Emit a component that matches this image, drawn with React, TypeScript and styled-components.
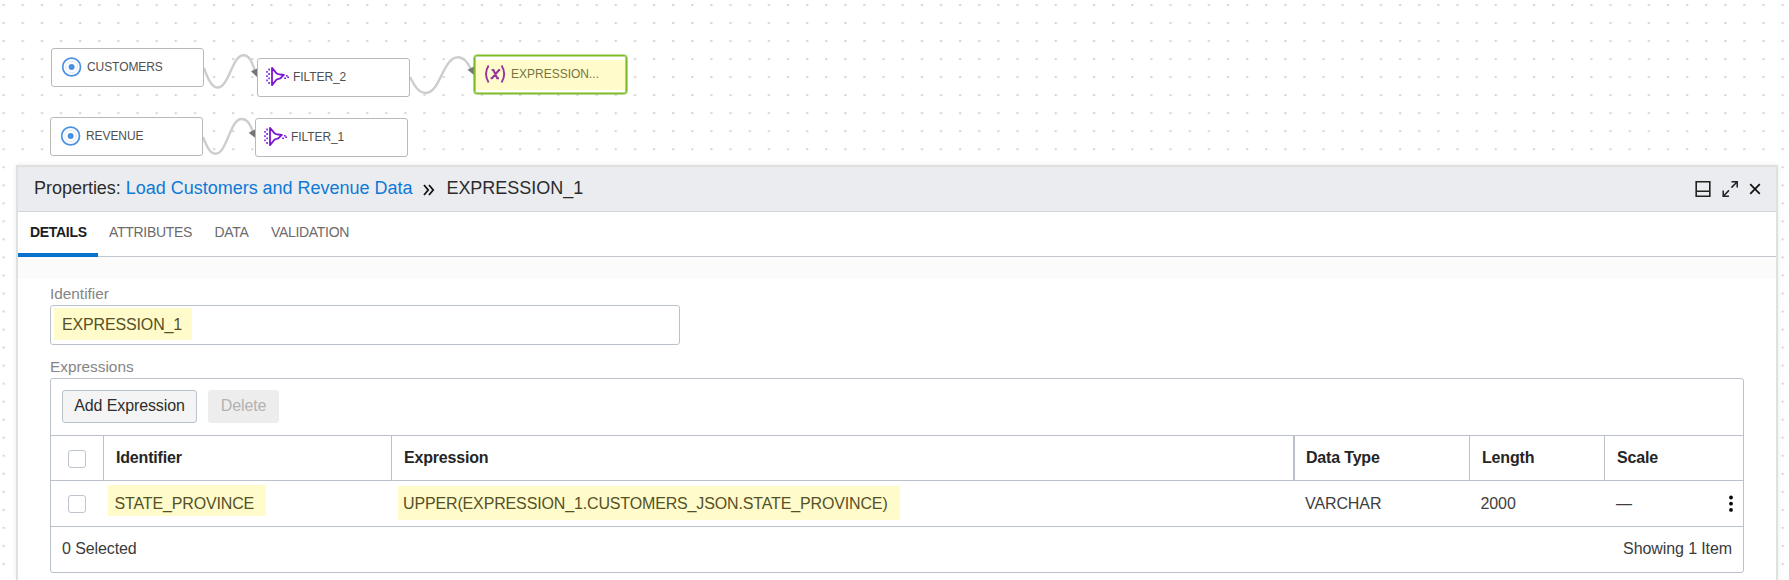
import React from "react";
import styled, { createGlobalStyle, css } from "styled-components";

const GlobalStyle = createGlobalStyle`
  * { box-sizing: border-box; }
  body {
    margin: 0;
    background: #fff;
    font-family: "Liberation Sans", Arial, sans-serif;
    color: #2b2b2b;
    overflow: hidden;
  }
`;

const Page = styled.main`
  position: relative;
  height: 580px;
  overflow: hidden;
  display: flex;
  flex-direction: column;
`;

const CanvasArt = styled.svg`
  position: absolute;
  inset: 0;
`;

const Canvas = styled.section`
  position: relative;
  flex: 0 0 165px;
`;

const Node = styled.div<{ $x: number; $y: number; $selected?: boolean }>`
  position: absolute;
  left: ${(p) => p.$x}px;
  top: ${(p) => p.$y}px;
  width: 153px;
  height: 39px;
  padding: 0 0 1px 8px;
  display: flex;
  align-items: center;
  background: #fff;
  border: 1px solid #b9b9b9;
  border-radius: 3px;
  font-size: 12px;
  letter-spacing: -0.08px;
  color: #505050;
  ${(p) =>
    p.$selected &&
    css`
      border-color: #7cbb27;
      box-shadow: 0 0 0 0.6px #7cbb27, inset 0 0 0 0.6px #7cbb27;
      padding-left: 9px;
      letter-spacing: 0;
      color: #77753f;
      background: linear-gradient(#fff 4px, #fffbca 4px, #fffbca 34px, #fff 34px);
    `}
`;

const NodeIcon = styled.svg`
  flex: none;
  width: 24px;
  height: 24px;
  margin-right: 3px;
`;

const Panel = styled.section`
  position: relative;
  flex: 1;
  margin: 0 11px 0 16px;
  border: 2px solid #dfe0e0;
  border-bottom: 0;
  background: #fff;
  box-shadow: 0 0 5px rgba(0, 0, 0, 0.09);
`;

const PanelHeader = styled.header`
  height: 45px;
  padding: 0 12px 1px 16px;
  display: flex;
  align-items: center;
  background: #ebecf0;
  border-bottom: 1px solid #d2d5db;
  font-size: 18px;
  letter-spacing: -0.02px;
`;

const PanelLink = styled.a`
  margin-left: 5px;
  color: #0f79d6;
`;

const Chevrons = styled.svg`
  margin: 3px 11px 0 11px;
`;

const HeaderTools = styled.div`
  margin-left: auto;
  padding-top: 1px;
  display: flex;
  align-items: center;
  gap: 9px;
  svg:last-child { margin-left: -2px; }
`;

const Tabs = styled.nav`
  height: 45px;
  display: flex;
  border-bottom: 1px solid #c3c7ce;
`;

const Tab = styled.div<{ $active?: boolean }>`
  height: 45px;
  padding: 12px 11.4px 0 11px;
  font-size: 14px;
  line-height: 16px;
  letter-spacing: -0.3px;
  color: #6b6b6b;
  ${(p) =>
    p.$active &&
    css`
      width: 80px;
      padding-left: 12px;
      padding-right: 0;
      font-weight: bold;
      color: #1c1c1c;
      border-bottom: 4px solid #0572ce;
    `}
`;

const Strip = styled.div`
  height: 22px;
  background: #fbfbfb;
`;

const Form = styled.div`
  padding: 0 32px;
`;

const Label = styled.label<{ $top: number }>`
  display: block;
  margin-top: ${(p) => p.$top}px;
  height: 20px;
  font-size: 15.4px;
  line-height: 20px;
  letter-spacing: -0.02px;
  color: #858585;
`;

const Field = styled.div`
  width: 630px;
  height: 40px;
  margin-top: 1px;
  padding: 2px 3px;
  border: 1px solid #bac1c9;
  border-radius: 3px;
`;

const Mark = styled.span<{ $w: number; $h: number; $pad: number; $top: number }>`
  display: block;
  width: ${(p) => p.$w}px;
  height: ${(p) => p.$h}px;
  padding: ${(p) => p.$top}px 0 0 ${(p) => p.$pad}px;
  background: #fffbca;
  color: #545127;
  font-size: 16px;
  line-height: 18px;
  letter-spacing: -0.145px;
  white-space: nowrap;
`;

const Table = styled.div`
  margin-top: 1px;
  height: 195px;
  border: 1px solid #bac1c9;
  border-radius: 3px;
  font-size: 16px;
`;

const Toolbar = styled.div`
  height: 56px;
  padding: 11px;
  display: flex;
  gap: 11px;
`;

const Button = styled.button<{ $w: number }>`
  width: ${(p) => p.$w}px;
  height: 33px;
  padding: 0 0 1px;
  border: 1px solid #b9c2cb;
  border-radius: 3px;
  background: #f4f4f4;
  color: #2d2d2d;
  font: inherit;
  letter-spacing: -0.1px;
  white-space: nowrap;
  &:disabled {
    border-color: #ededed;
    background: #ededed;
    color: #b2b2b2;
  }
`;

const Row = styled.div<{ $h: number }>`
  height: ${(p) => p.$h}px;
  display: grid;
  grid-template-columns: 52px 288px 902px 176px 135px 1fr;
  border-top: 1px solid #bac1c9;
`;

const HeadCell = styled.div<{ $thick?: boolean }>`
  padding: 13px 0 0 ${(p) => (p.$thick ? 11 : 12)}px;
  border-left: ${(p) => (p.$thick ? 2 : 1)}px solid #bac1c9;
  font-weight: bold;
  line-height: 18px;
  letter-spacing: -0.18px;
  color: #252525;
`;

const CheckCell = styled.div`
  padding: 14px 0 0 17px;
`;

const Checkbox = styled.div`
  width: 18px;
  height: 18px;
  border: 1px solid #bdc4cf;
  border-radius: 3px;
`;

const Cell = styled.div<{ $left?: number; $top?: number }>`
  padding: ${(p) => p.$top ?? 14}px 0 0 ${(p) => p.$left ?? 12}px;
  line-height: 18px;
  letter-spacing: -0.1px;
  color: #3e3e3e;
`;

const LastCell = styled(Cell)`
  display: flex;
  justify-content: space-between;
  padding-right: 8px;
`;

const Footer = styled.footer`
  height: 46px;
  padding: 13px 11px 0;
  display: flex;
  justify-content: space-between;
  border-top: 1px solid #bac1c9;
  line-height: 18px;
  letter-spacing: -0.1px;
  color: #3b3b3b;
`;

const SourceIcon = () => (
  <NodeIcon viewBox="0 0 24 24" fill="none" stroke="#4a90e2">
    <circle cx="11.6" cy="12" r="8.9" strokeWidth="1.7" />
    <circle cx="11.6" cy="12" r="5.8" strokeWidth="1" stroke="#dce9f8" />
    <circle cx="11.6" cy="12" r="3" fill="#4a90e2" stroke="none" />
  </NodeIcon>
);

const FilterIcon = () => (
  <NodeIcon viewBox="0 0 24 24" fill="none" stroke="#7b16cf">
    <path d="M6 2.9V20.1L10.4 14.7C12 13.5 14.8 14.3 15.3 12.3L17.9 9.8C14 9.6 12 9.8 10.4 8.1Z" strokeWidth="1.8" strokeLinejoin="round" />
    <path d="M3.1 3.6v1.9M3.1 8v1.9M3.1 12.4v1.9M3.1 17v1.9M1 6v1.8M1 10.2v1.8M1 14.4v1.8" strokeWidth="1.7" stroke="#8b32dc" />
    <path d="M18.2 13.3h1.8M20 10.8h1.6M21.3 12.2h1.7" strokeWidth="1.6" />
  </NodeIcon>
);

const ExpressionIcon = () => (
  <NodeIcon viewBox="0 0 24 24" fill="none" stroke="#95359d" strokeWidth="1.9">
    <path d="M4.6 3.6Q-.6 12 4.6 20.4M17.6 3.6Q22.8 12 17.6 20.4" />
    <path d="M7.6 8H9.4L13.2 16.2H15M16.2 8H15L8 16.2H6.6" strokeWidth="2.1" />
  </NodeIcon>
);

export default function App() {
  return (
    <>
      <GlobalStyle />
      <Page>
        <CanvasArt width="1789" height="580">
          <defs>
            <pattern id="dots" x="2.5" y="4" width="19.13" height="18.03" patternUnits="userSpaceOnUse">
              <rect width="2.3" height="2" fill="#d7d7d7" />
            </pattern>
          </defs>
          <rect width="1789" height="580" fill="url(#dots)" />
          <g fill="none" stroke="#cdcdcd" strokeWidth="2.4">
            <path d="M204 68C208 80 212 87.5 217.5 87.5C229 87.5 232 55.3 243.5 55.3C249.5 55.3 252 62 255 71" />
            <path d="M203 137C207 147 210 153.8 215.5 153.8C227 153.8 230 119 241.5 119C247.5 119 250 124 253 132" />
            <path d="M410 77C415 87 419 93 426 93C440 93 443 57.3 458 57.3C464 57.3 467 62 471 69" />
          </g>
          <g fill="#757575">
            <path d="M251 71.3L257 68.5V77Z" />
            <path d="M248.7 132.7L255 129.5V137.8Z" />
            <path d="M467.5 69.7L474 66.5V75Z" />
          </g>
        </CanvasArt>
        <Canvas>
          <Node $x={51} $y={48}><SourceIcon />CUSTOMERS</Node>
          <Node $x={257} $y={57.6}><FilterIcon />FILTER_2</Node>
          <Node $x={474} $y={55} $selected><ExpressionIcon />EXPRESSION...</Node>
          <Node $x={50} $y={117}><SourceIcon />REVENUE</Node>
          <Node $x={255} $y={118}><FilterIcon />FILTER_1</Node>
        </Canvas>
        <Panel>
          <PanelHeader>
            Properties:<PanelLink>Load Customers and Revenue Data</PanelLink>
            <Chevrons width="12" height="12" fill="none" stroke="#151515" strokeWidth="1.8">
              <path d="M1 1L5.2 6L1 11M6 1L10.2 6L6 11" />
            </Chevrons>
            EXPRESSION_1
            <HeaderTools>
              <svg width="18" height="18" fill="none" stroke="#20231f" strokeWidth="1.6">
                <path d="M2.2 1.8H15.8V16.2H2.2ZM2.2 11.3H15.8" />
              </svg>
              <svg width="18" height="18" fill="none" stroke="#222" strokeWidth="1.5">
                <path d="M10.5 1.8H16.2V7.5M16 2L10.4 7.6M2.2 10.5V16.2H7.9M2.4 16L8 10.4" />
              </svg>
              <svg width="18" height="18" fill="none" stroke="#111" strokeWidth="1.7">
                <path d="M4.2 4.2L13.8 13.8M13.8 4.2L4.2 13.8" />
              </svg>
            </HeaderTools>
          </PanelHeader>
          <Tabs>
            <Tab $active>DETAILS</Tab>
            <Tab>ATTRIBUTES</Tab>
            <Tab>DATA</Tab>
            <Tab>VALIDATION</Tab>
          </Tabs>
          <Strip />
          <Form>
            <Label $top={5}>Identifier</Label>
            <Field><Mark $w={138} $h={32} $pad={8} $top={8}>EXPRESSION_1</Mark></Field>
            <Label $top={12}>Expressions</Label>
            <Table>
              <Toolbar>
                <Button $w={135}>Add Expression</Button>
                <Button $w={71} disabled>Delete</Button>
              </Toolbar>
              <Row $h={45}>
                <CheckCell><Checkbox /></CheckCell>
                <HeadCell>Identifier</HeadCell>
                <HeadCell>Expression</HeadCell>
                <HeadCell $thick>Data Type</HeadCell>
                <HeadCell>Length</HeadCell>
                <HeadCell>Scale</HeadCell>
              </Row>
              <Row $h={46}>
                <CheckCell><Checkbox /></CheckCell>
                <Cell $left={5} $top={4}><Mark $w={158} $h={31} $pad={6.5} $top={10}>STATE_PROVINCE</Mark></Cell>
                <Cell $left={7} $top={5}><Mark $w={502} $h={34} $pad={5} $top={9}>UPPER(EXPRESSION_1.CUSTOMERS_JSON.STATE_PROVINCE)</Mark></Cell>
                <Cell>VARCHAR</Cell>
                <Cell $left={11.5}>2000</Cell>
                <LastCell>
                  —
                  <svg width="8" height="18" fill="#080808">
                    <circle cx="4" cy="2.5" r="1.9" /><circle cx="4" cy="8.7" r="1.9" /><circle cx="4" cy="14.9" r="1.9" />
                  </svg>
                </LastCell>
              </Row>
              <Footer><span>0 Selected</span><span>Showing 1 Item</span></Footer>
            </Table>
          </Form>
        </Panel>
      </Page>
    </>
  );
}
